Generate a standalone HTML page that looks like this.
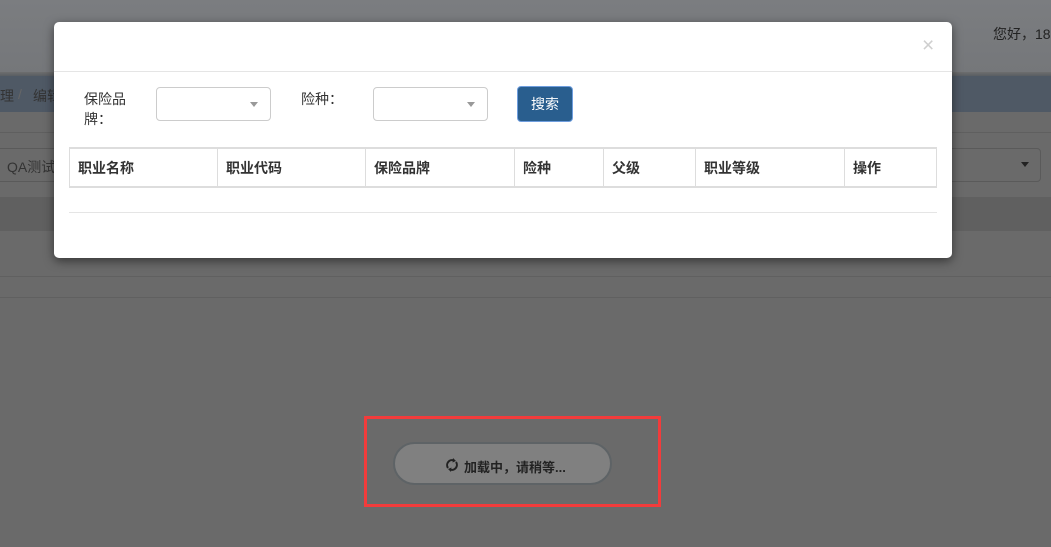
<!DOCTYPE html>
<html><head><meta charset="utf-8"><style>
*{box-sizing:border-box;margin:0;padding:0}
body{width:1051px;height:547px;overflow:hidden;position:relative;background:#6a6a6a;font-family:"Liberation Sans","Noto Sans CJK SC",sans-serif;font-size:14px;color:#333}
.abs{position:absolute}
.hdr{left:0;top:0;width:1051px;height:72px;background:linear-gradient(#7b7d80,#75777a)}
.shadow{left:0;top:72px;width:1051px;height:4px;background:linear-gradient(#6e6e6e,#5a5e63)}
.bc{left:0;top:76px;width:1051px;height:36px;background:#4f5965;color:#333}
.modal{left:54px;top:22px;width:898px;height:236px;background:#fff;border-radius:5px;box-shadow:0 3px 10px rgba(0,0,0,.5)}
.sel{background:#fff;border:1px solid #ccc;border-radius:4px;height:34px}
.caret{position:absolute;right:12px;top:14px;border-left:4px solid transparent;border-right:4px solid transparent;border-top:5px solid #999}
table{border-collapse:collapse;position:absolute;left:15px;top:125px;width:868px}
th{border:2px solid #ddd;border-width:2px 1px;height:39px;text-align:left;padding-left:8px;font-weight:bold;font-size:14px;color:#333}
</style></head><body>
<div class="abs hdr"></div>
<div class="abs" style="left:993px;top:24px;color:#222">您好，18</div>
<div class="abs shadow"></div>
<div class="abs bc"><span class="abs" style="left:0;top:10px;color:#333">理</span><span class="abs" style="left:18px;top:10px;color:#666">/</span><span class="abs" style="left:33px;top:10px;color:#333">编辑</span></div>
<div class="abs" style="left:0;top:132px;width:1051px;height:1px;background:#5f5f5f"></div>
<div class="abs" style="left:-5px;top:148px;width:1046px;height:34px;border:1px solid #5a5a5a;border-radius:4px"></div>
<div class="abs" style="left:7px;top:157px;color:#333">QA测试</div>
<div class="abs" style="left:1021px;top:162px;border-left:4px solid transparent;border-right:4px solid transparent;border-top:5px solid #222"></div>
<div class="abs" style="left:0;top:197px;width:1051px;height:34px;background:#606060"></div>
<div class="abs" style="left:0;top:276px;width:1051px;height:1px;background:#606060"></div>
<div class="abs" style="left:0;top:297px;width:1051px;height:1px;background:#606060"></div>

<div class="abs modal">
 <div class="abs" style="left:868px;top:12px;font-size:21px;color:#cfcfcf">×</div>
 <div class="abs" style="left:0;top:49px;width:898px;height:1px;background:#e5e5e5"></div>
 <div class="abs" style="left:30px;top:67px;line-height:20px;color:#333">保险品<br>牌：</div>
 <div class="abs sel" style="left:102px;top:65px;width:115px"><div class="caret"></div></div>
 <div class="abs" style="left:247px;top:67px;line-height:20px">险种：</div>
 <div class="abs sel" style="left:319px;top:65px;width:115px"><div class="caret"></div></div>
 <div class="abs" style="left:463px;top:64px;width:56px;height:36px;background:#295e8e;border:1px solid #6f9ede;border-radius:4px;color:#fff;text-align:center;line-height:34px">搜索</div>
 <table><tr><th style="width:148px">职业名称</th><th style="width:148px">职业代码</th><th style="width:149px">保险品牌</th><th style="width:89px">险种</th><th style="width:92px">父级</th><th style="width:149px">职业等级</th><th>操作</th></tr></table>
 <div class="abs" style="left:15px;top:190px;width:868px;height:1px;background:#e5e5e5"></div>
</div>

<div class="abs" style="left:364px;top:416px;width:297px;height:91px;border:3px solid #f23b3b"></div>
<div class="abs" style="left:393px;top:442px;width:219px;height:43px;background:#808080;border:2px solid #5e6366;border-radius:22px"></div>
<svg class="abs" style="left:445px;top:457px" width="14" height="16" viewBox="0 0 14 16"><path d="M3 11A5 5 0 0 1 9 3.5" fill="none" stroke="#222" stroke-width="2"/><path d="M8 1l3 3-3.5 1.5z" fill="#222"/><path d="M11 5A5 5 0 0 1 5 12.5" fill="none" stroke="#222" stroke-width="2"/><path d="M6 15l-3-3 3.5-1.5z" fill="#222"/></svg>
<div class="abs" style="left:464px;top:457px;font-size:13px;color:#222;font-weight:bold">加载中，请稍等...</div>
</body></html>
